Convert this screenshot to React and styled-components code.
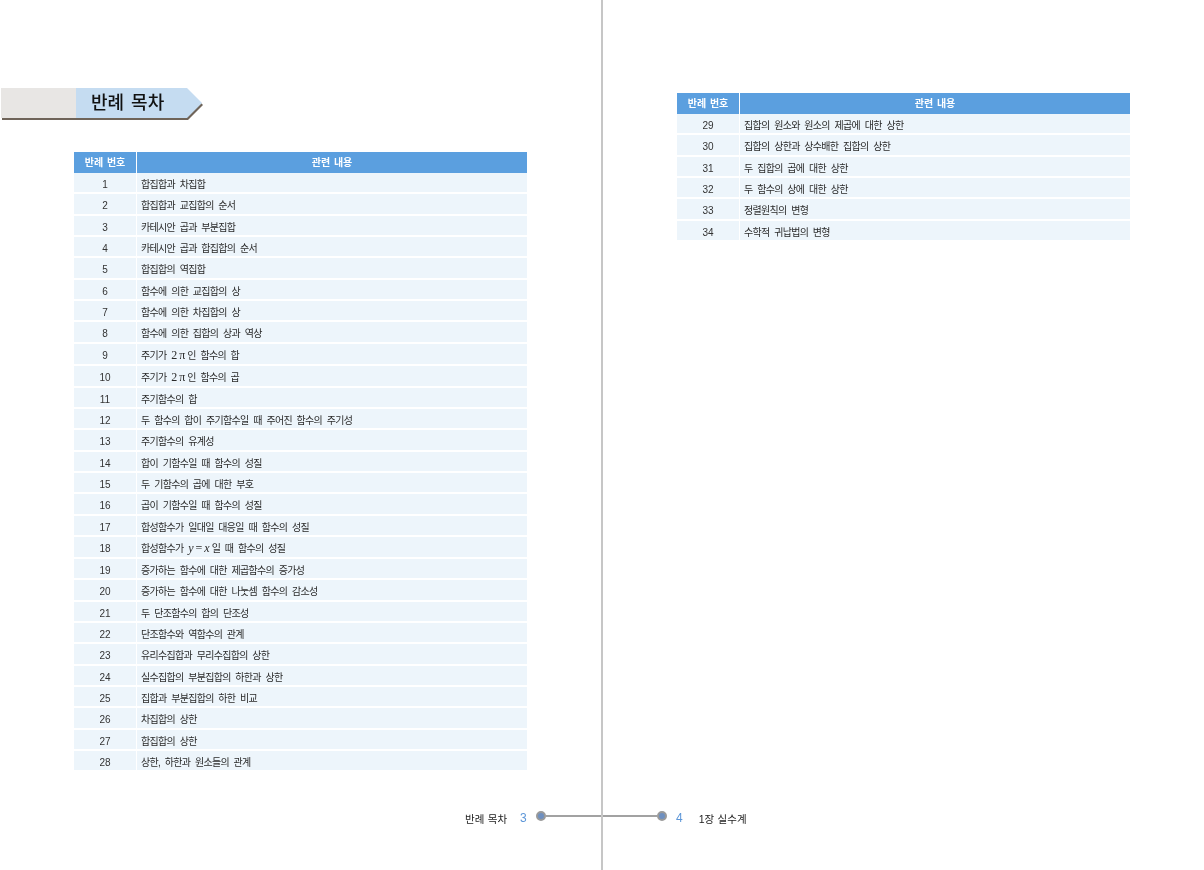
import React from 'react'
import styled, { createGlobalStyle } from 'styled-components'

const GlobalStyle = createGlobalStyle`
  html, body {
    margin: 0;
    padding: 0;
    background: #fff;
  }
  body {
    font-family: "Liberation Sans", "Noto Sans CJK KR", sans-serif;
    color: #222;
  }
`

const Formula = ({ children }) => <MathText>{children}</MathText>

const leftRows = [
  { no: 1, text: '합집합과 차집합' },
  { no: 2, text: '합집합과 교집합의 순서' },
  { no: 3, text: '카테시안 곱과 부분집합' },
  { no: 4, text: '카테시안 곱과 합집합의 순서' },
  { no: 5, text: '합집합의 역집합' },
  { no: 6, text: '함수에 의한 교집합의 상' },
  { no: 7, text: '함수에 의한 차집합의 상' },
  { no: 8, text: '함수에 의한 집합의 상과 역상' },
  { no: 9, tall: true, text: <>주기가 <Formula>2π</Formula>인 함수의 합</> },
  { no: 10, tall: true, text: <>주기가 <Formula>2π</Formula>인 함수의 곱</> },
  { no: 11, text: '주기함수의 합' },
  { no: 12, text: '두 함수의 합이 주기함수일 때 주어진 함수의 주기성' },
  { no: 13, text: '주기함수의 유계성' },
  { no: 14, text: '합이 기함수일 때 함수의 성질' },
  { no: 15, text: '두 기함수의 곱에 대한 부호' },
  { no: 16, text: '곱이 기함수일 때 함수의 성질' },
  { no: 17, text: '합성함수가 일대일 대응일 때 함수의 성질' },
  { no: 18, tall: true, text: <>합성함수가 <Formula><i>y</i>=<i>x</i></Formula>일 때 함수의 성질</> },
  { no: 19, text: '증가하는 함수에 대한 제곱함수의 증가성' },
  { no: 20, text: '증가하는 함수에 대한 나눗셈 함수의 감소성' },
  { no: 21, text: '두 단조함수의 합의 단조성' },
  { no: 22, text: '단조함수와 역함수의 관계' },
  { no: 23, text: '유리수집합과 무리수집합의 상한' },
  { no: 24, text: '실수집합의 부분집합의 하한과 상한' },
  { no: 25, text: '집합과 부분집합의 하한 비교' },
  { no: 26, text: '차집합의 상한' },
  { no: 27, text: '합집합의 상한' },
  { no: 28, text: '상한, 하한과 원소들의 관계' },
]

const rightRows = [
  { no: 29, text: '집합의 원소와 원소의 제곱에 대한 상한' },
  { no: 30, text: '집합의 상한과 상수배한 집합의 상한' },
  { no: 31, text: '두 집합의 곱에 대한 상한' },
  { no: 32, text: '두 함수의 상에 대한 상한' },
  { no: 33, text: '정렬원칙의 변형' },
  { no: 34, text: '수학적 귀납법의 변형' },
]

const CounterTable = ({ rows }) => (
  <Table>
    <HeadRow>
      <HeadCell>반례 번호</HeadCell>
      <HeadCell>관련 내용</HeadCell>
    </HeadRow>
    {rows.map((row) => (
      <Row key={row.no} $tall={row.tall}>
        <NoCell>{row.no}</NoCell>
        <TextCell>{row.text}</TextCell>
      </Row>
    ))}
  </Table>
)

const App = () => {
  return (
    <>
      <GlobalStyle />
      <Spread>
        <LeftPage>
          <Banner>
            <BannerTail />
            <BannerHead>반례 목차</BannerHead>
          </Banner>
          <LeftTableArea>
            <CounterTable rows={leftRows} />
          </LeftTableArea>
          <LeftFooter>
            <FooterTitle>반례 목차</FooterTitle>
            <PageNumber $left>3</PageNumber>
            <Dot />
            <FooterLine />
          </LeftFooter>
        </LeftPage>
        <RightPage>
          <RightTableArea>
            <CounterTable rows={rightRows} />
          </RightTableArea>
          <RightFooter>
            <FooterLine $short />
            <Dot />
            <PageNumber>4</PageNumber>
            <FooterTitle>1장 실수계</FooterTitle>
          </RightFooter>
        </RightPage>
      </Spread>
    </>
  )
}

const Spread = styled.div`
  display: grid;
  grid-template-columns: 601px 603px;
  width: 1204px;
  height: 870px;
  overflow: hidden;
  filter: blur(0.3px);
`

const LeftPage = styled.div`
  display: flex;
  flex-direction: column;
  height: 870px;
`

const RightPage = styled.div`
  display: flex;
  flex-direction: column;
  height: 870px;
  box-sizing: border-box;
  border-left: 2px solid #c6c6c6;
`

const Banner = styled.div`
  display: flex;
  width: 202px;
  height: 30px;
  margin: 88px 0 0 1px;
  filter: drop-shadow(1px 2px 0.6px #6f6459);
`

const BannerTail = styled.div`
  width: 75px;
  background: #e8e6e4;
`

const BannerHead = styled.div`
  flex: 1;
  padding-left: 15px;
  background: #c5dcf1;
  clip-path: polygon(0 0, 111px 0, 126px 50%, 111px 100%, 0 100%);
  font-size: 18px;
  font-weight: 500;
  line-height: 30px;
  color: #111;
  word-spacing: 2px;
  white-space: nowrap;
`

const LeftTableArea = styled.div`
  margin: 34px 0 0 74px;
`

const RightTableArea = styled.div`
  margin: 93px 0 0 74px;
`

const Table = styled.div`
  display: flex;
  flex-direction: column;
  width: 453px;
`

const HeadRow = styled.div`
  display: grid;
  grid-template-columns: 62px 1fr;
  column-gap: 1px;
  height: 20px;
  margin-bottom: 1px;
`

const HeadCell = styled.div`
  background: #5b9fdf;
  color: #fff;
  font-size: 10px;
  font-weight: 700;
  line-height: 21px;
  text-align: center;
  word-spacing: 1px;
`

const Row = styled.div`
  display: grid;
  grid-template-columns: 62px 1fr;
  grid-template-rows: minmax(0, 1fr);
  column-gap: 1px;
  box-sizing: border-box;
  height: ${(p) => (p.$tall ? '22px' : '21.33px')};
  border-bottom: 2px solid #fff;
`

const NoCell = styled.div`
  background: #edf5fb;
  color: #333;
  font-size: 10px;
  line-height: 23px;
  text-align: center;
`

const TextCell = styled.div`
  background: #edf5fb;
  color: #2a2a2a;
  font-size: 10px;
  line-height: 23px;
  padding-left: 4px;
  letter-spacing: -0.7px;
  word-spacing: 2.6px;
  white-space: nowrap;
`

const MathText = styled.span`
  font-family: "Liberation Serif", serif;
  font-size: 12px;
  letter-spacing: 2px;
`

const LeftFooter = styled.div`
  display: flex;
  align-items: center;
  height: 12px;
  margin-top: auto;
  margin-bottom: 48px;
  padding-left: 465px;
`

const RightFooter = styled.div`
  display: flex;
  align-items: center;
  height: 12px;
  margin-top: auto;
  margin-bottom: 48px;
`

const FooterTitle = styled.span`
  position: relative;
  top: 2px;
  font-size: 10.5px;
  color: #222;
  word-spacing: 0.5px;
  white-space: nowrap;
`

const PageNumber = styled.span`
  position: relative;
  top: 2px;
  margin: ${(p) => (p.$left ? '0 9px 0 13px' : '0 16px 0 9px')};
  font-size: 12px;
  color: #5c96d8;
`

const Dot = styled.span`
  flex: none;
  box-sizing: border-box;
  width: 10px;
  height: 10px;
  border-radius: 50%;
  background: #6f90c0;
  border: 2.5px solid #9a9a9a;
`

const FooterLine = styled.span`
  flex: ${(p) => (p.$short ? '0 0 54px' : '1')};
  height: 2px;
  background: #a2a2a2;
`

export default App
